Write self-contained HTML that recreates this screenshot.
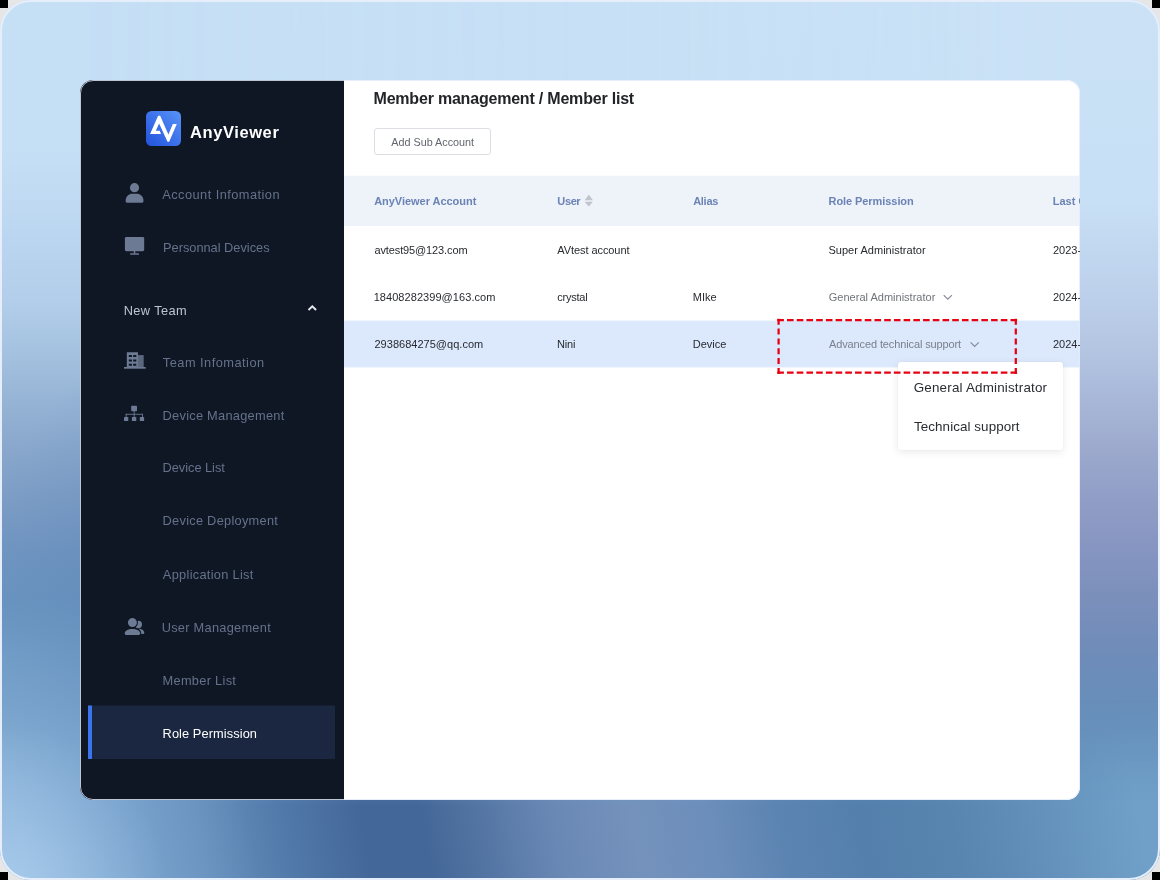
<!DOCTYPE html>
<html lang="en">
<head>
<meta charset="utf-8">
<title>AnyViewer - Member list</title>
<style>
*{box-sizing:border-box;margin:0;padding:0}
html,body{width:1160px;height:880px;overflow:hidden}
body{position:relative;background:#e6e6e6;font-family:"Liberation Sans",sans-serif}
.k{position:absolute;width:8px;height:8px;background:#000}
#bg{position:absolute;left:0;top:0;width:1160px;height:880px;border-radius:31px;overflow:hidden;background:radial-gradient(ellipse 260px 300px at 235px 615px,rgba(84,124,176,.5) 0%,rgba(84,124,176,0) 100%),linear-gradient(180deg,rgb(197,223,245) 0px,rgb(197,223,245) 150px,rgb(192,218,243) 200px,rgb(178,206,234) 300px,rgb(165,194,224) 350px,rgb(150,180,213) 400px,rgb(137,167,204) 450px,rgb(124,157,197) 500px,rgb(112,150,193) 550px,rgb(106,148,192) 600px,rgb(112,156,198) 650px,rgb(117,160,201) 700px,rgb(122,165,205) 750px,rgb(126,168,208) 800px,rgb(132,173,212) 880px)}
#bgR{position:absolute;left:0;top:0;width:1160px;height:880px;background:linear-gradient(180deg,rgb(202,225,246) 0px,rgb(200,224,245) 200px,rgb(193,215,240) 250px,rgb(188,207,234) 300px,rgb(180,197,226) 350px,rgb(168,183,216) 400px,rgb(156,169,205) 450px,rgb(144,157,198) 500px,rgb(134,149,193) 550px,rgb(123,143,187) 600px,rgb(112,140,185) 650px,rgb(104,142,186) 700px,rgb(102,145,188) 750px,rgb(104,150,192) 800px,rgb(112,160,200) 880px);-webkit-mask-image:linear-gradient(90deg,rgba(0,0,0,0) 80px,rgba(0,0,0,1) 1080px);mask-image:linear-gradient(90deg,rgba(0,0,0,0) 80px,rgba(0,0,0,1) 1080px)}
#bgB{position:absolute;left:0;top:700px;width:1160px;height:180px;background:linear-gradient(80deg,rgb(130,171,211) 2.27%,rgb(118,160,203) 9.01%,rgb(104,146,191) 17.42%,rgb(80,120,168) 25.00%,rgb(67,103,152) 31.31%,rgb(67,103,152) 36.36%,rgb(86,119,165) 41.83%,rgb(106,136,180) 47.30%,rgb(116,146,188) 54.12%,rgb(108,142,186) 60.34%,rgb(92,132,178) 66.23%,rgb(84,127,172) 72.97%,rgb(88,132,176) 80.54%,rgb(100,146,188) 88.96%,rgb(112,160,200) 96.53%);-webkit-mask-image:linear-gradient(180deg,rgba(0,0,0,0) 0px,rgba(0,0,0,.12) 30px,rgba(0,0,0,.5) 65px,rgba(0,0,0,1) 106px);mask-image:linear-gradient(180deg,rgba(0,0,0,0) 0px,rgba(0,0,0,.12) 30px,rgba(0,0,0,.5) 65px,rgba(0,0,0,1) 106px)}
#bgC{position:absolute;left:0;top:600px;width:320px;height:280px;background:radial-gradient(ellipse 260px 270px at 0px 300px,rgba(170,205,237,1) 0%,rgba(170,205,237,.5) 35%,rgba(170,205,237,.1) 65%,rgba(170,205,237,0) 100%)}
#bgb{position:absolute;left:0;top:0;width:1160px;height:880px;border-radius:31px;border:2px solid #e6eefc;z-index:2}
#win{position:absolute;left:80px;top:80px;width:1000px;height:720px;border-radius:13px;overflow:hidden;background:#fff;z-index:3}
#win:after{content:"";position:absolute;left:0;top:0;right:0;bottom:0;border:1px solid rgba(226,236,251,.82);border-radius:13px;z-index:9}
#wi{position:absolute;left:0;top:0;width:1000px;height:720px}
#side{position:absolute;left:0;top:0;width:264px;height:720px;background:#0f1624}
#act{position:absolute;left:8px;top:626px;width:247px;height:53px;background:#1b2740;box-shadow:0 -1px 0 rgba(27,39,64,.5)}
#act i{position:absolute;left:0;top:0;width:4px;height:53px;background:#3c74ee;box-shadow:0 -1px 0 rgba(60,116,238,.5)}
#thead{position:absolute;left:264px;top:96px;width:736px;height:50px;background:#eef2f9;box-shadow:0 -1px 0 rgba(238,242,249,.3)}
#row3{position:absolute;left:264px;top:241px;width:736px;height:46px;background:#dce9fd;box-shadow:0 -1px 0 rgba(220,233,253,.4),0 1px 0 rgba(220,233,253,.4)}
#btn{position:absolute;left:294px;top:48px;width:117px;height:27px;border:1px solid #dbdee3;border-radius:3px;background:#fff}
.t{position:absolute;white-space:nowrap;display:block}
svg{position:absolute;overflow:visible}
#pop{position:absolute;left:898px;top:362px;width:165px;height:88px;background:#fff;border-radius:3px;box-shadow:0 2px 9px rgba(0,0,0,.09),0 0 2px rgba(0,0,0,.04);z-index:20}
#red{z-index:25}
#txt{position:absolute;left:0;top:0;width:1080px;height:880px;overflow:hidden;z-index:40;pointer-events:none;will-change:transform}
</style>
</head>
<body>
<div class="k" style="left:0;top:0"></div><div class="k" style="right:0;top:0"></div>
<div class="k" style="left:0;bottom:0"></div><div class="k" style="right:0;bottom:0"></div>
<div id="bg"><div id="bgR"></div><div id="bgB"></div><div id="bgC"></div></div><div id="bgb"></div>
<div id="win"><div id="wi">
  <div id="side"><div id="act"><i></i></div></div>
  <div id="thead"></div>
  <div id="row3"></div>
  <div id="btn"></div>
</div></div>

<!-- icons (page coordinates) -->
<svg id="ico" width="1160" height="880" viewBox="0 0 1160 880" style="left:0;top:0;z-index:6">
  <defs>
    <linearGradient id="lg" x1="1" y1="0" x2="0" y2="1"><stop offset="0" stop-color="#5893f9"/><stop offset="1" stop-color="#2252dc"/></linearGradient>
  </defs>
  <!-- logo -->
  <rect x="146" y="111" width="35" height="35" rx="5.5" fill="url(#lg)"/>
  <path d="M150.07 133.89 L158.14 115.7 L160.19 115.7 L168.41 134.38 L172.81 124.11 L176.82 124.11 L169.19 141.82 L167.53 141.82 L159.11 123.38 L155.84 130.72 L159.8 130.72 L161.0 133.89 Z" fill="#fff"/>
  <g fill="#6c7a93">
    <!-- person -->
    <circle cx="134.5" cy="187.7" r="4.6"/>
    <path d="M125.7 200.2 C125.7 196.2 129 193.7 132.4 193.7 L136.7 193.7 C140.1 193.7 143.4 196.2 143.4 200.2 L143.4 201.2 Q143.4 202.8 141.8 202.8 L127.3 202.8 Q125.7 202.8 125.7 201.2 Z"/>
    <!-- monitor -->
    <rect x="124.9" y="236.9" width="19.3" height="14.3" rx="1.4"/>
    <rect x="133.7" y="251" width="1.6" height="2.6"/>
    <rect x="130.1" y="253.3" width="8.9" height="1.5" rx=".5"/>
    <!-- building -->
    <path fill-rule="evenodd" d="M126.8 352.2H138V367H126.8Z M128.8 355.1h3.1v2h-3.1Z M133.2 355.1h3.1v2h-3.1Z M128.8 359.5h3.1v2h-3.1Z M133.2 359.5h3.1v2h-3.1Z M128.8 363.8h3.1v2h-3.1Z M133.2 363.8h3.1v2h-3.1Z"/>
    <rect x="138" y="355.1" width="5.7" height="11.9" fill="#5a667e"/>
    <rect x="124" y="367" width="21.7" height="1.7"/>
    <!-- sitemap -->
    <rect x="131.2" y="405.7" width="5.8" height="5.5" rx=".6"/>
    <rect x="124" y="417" width="4.3" height="4.1" rx=".5"/>
    <rect x="131.9" y="417" width="4.4" height="4.1" rx=".5"/>
    <rect x="139.8" y="417" width="4.3" height="4.1" rx=".5"/>
    <rect x="133.7" y="411" width="0.9" height="6.2"/>
    <rect x="125.7" y="413.8" width="17.3" height="0.9"/>
    <rect x="125.7" y="413.8" width="0.9" height="3.4"/>
    <rect x="142.1" y="413.8" width="0.9" height="3.4"/>
    <!-- users -->
    <circle cx="138.4" cy="624.4" r="3.6"/>
    <path d="M132 634.1 C132 630.8 135 628.8 138.6 628.8 C142.3 628.8 144.3 631 144.3 633 Q144.3 634.1 143.2 634.1 Z"/>
    <circle cx="132.4" cy="622.6" r="5.6" fill="#0f1624"/>
    <path d="M123.7 636 C123.7 629.3 126 627.9 132.4 627.9 C139.4 627.9 141.4 629.2 141.4 636 Z" fill="#0f1624"/>
    <circle cx="132.4" cy="622.6" r="4.5"/>
    <path d="M124.7 633.6 C124.7 630.5 128 628.9 132.4 628.9 C136.8 628.9 140.2 630.5 140.2 633.6 Q140.2 635 138.8 635 L126.1 635 Q124.7 635 124.7 633.6 Z"/>
  </g>
  <!-- chevron up (New Team) -->
  <polyline points="308.5,310 312.3,306.3 316.1,310" fill="none" stroke="#e6e9ef" stroke-width="1.9"/>
  <!-- sort arrows -->
  <path d="M588.8 194.6 L592.9 200.2 L584.7 200.2 Z M584.7 201.7 L592.9 201.7 L588.8 206.5 Z" fill="#c0c4cc"/>
  <!-- chevrons down -->
  <polyline points="943.7,295.1 947.8,299.2 951.9,295.1" fill="none" stroke="#868b95" stroke-width="1.2"/>
  <polyline points="970.6,342.3 974.7,346.4 978.8,342.3" fill="none" stroke="#868b95" stroke-width="1.2"/>
</svg>

<svg id="red" width="1160" height="880" viewBox="0 0 1160 880" style="left:0;top:0">
  <g fill="none" stroke="#e60012" stroke-width="2.25">
  <path d="M777.3 320 H1017.1 M777.3 372.6 H1017.1" stroke-dasharray="6.6 3.117"/>
  <path d="M778.6 318.7 V373.9 M1015.8 318.7 V373.9" stroke-dasharray="6 3.84"/>
  </g>
</svg>
<div id="pop"></div>
<div id="txt">
<span class="t" style="left:189.99px;top:120.6px;font-size:16.5px;line-height:22px;font-weight:700;color:#ffffff;letter-spacing:0.593px">AnyViewer</span>
<span class="t" style="left:162.22px;top:186.0px;font-size:12.8px;line-height:17px;font-weight:400;color:#65728b;letter-spacing:0.456px">Account Infomation</span>
<span class="t" style="left:163.02px;top:239.4px;font-size:12.8px;line-height:17px;font-weight:400;color:#65728b;letter-spacing:-0.009px">Personnal Devices</span>
<span class="t" style="left:123.63px;top:301.6px;font-size:12.8px;line-height:17px;font-weight:400;color:#bfc5d0;letter-spacing:0.409px">New Team</span>
<span class="t" style="left:162.82px;top:353.7px;font-size:12.8px;line-height:17px;font-weight:400;color:#65728b;letter-spacing:0.477px">Team Infomation</span>
<span class="t" style="left:162.58px;top:407.1px;font-size:12.8px;line-height:17px;font-weight:400;color:#65728b;letter-spacing:0.268px">Device Management</span>
<span class="t" style="left:162.58px;top:459.0px;font-size:12.8px;line-height:17px;font-weight:400;color:#65728b;letter-spacing:-0.031px">Device List</span>
<span class="t" style="left:162.58px;top:511.9px;font-size:12.8px;line-height:17px;font-weight:400;color:#65728b;letter-spacing:0.268px">Device Deployment</span>
<span class="t" style="left:162.87px;top:565.6px;font-size:12.8px;line-height:17px;font-weight:400;color:#65728b;letter-spacing:0.292px">Application List</span>
<span class="t" style="left:161.70px;top:619.4px;font-size:12.8px;line-height:17px;font-weight:400;color:#65728b;letter-spacing:0.267px">User Management</span>
<span class="t" style="left:162.55px;top:672.2px;font-size:12.8px;line-height:17px;font-weight:400;color:#65728b;letter-spacing:0.294px">Member List</span>
<span class="t" style="left:162.56px;top:724.8px;font-size:12.8px;line-height:17px;font-weight:400;color:#ffffff;letter-spacing:0.090px">Role Permission</span>
<span class="t" style="left:373.53px;top:87.9px;font-size:16px;line-height:21px;font-weight:700;color:#222428;letter-spacing:-0.203px">Member management / Member list</span>
<span class="t" style="left:391.28px;top:134.7px;font-size:10.8px;line-height:15px;font-weight:400;color:#62666d;letter-spacing:-0.003px">Add Sub Account</span>
<span class="t" style="left:374.16px;top:193.6px;font-size:11px;line-height:15px;font-weight:700;color:#6b83b5;letter-spacing:-0.032px">AnyViewer Account</span>
<span class="t" style="left:557.37px;top:193.6px;font-size:11px;line-height:15px;font-weight:700;color:#6b83b5;letter-spacing:-0.397px">User</span>
<span class="t" style="left:693.20px;top:193.6px;font-size:11px;line-height:15px;font-weight:700;color:#6b83b5;letter-spacing:-0.286px">Alias</span>
<span class="t" style="left:828.53px;top:193.6px;font-size:11px;line-height:15px;font-weight:700;color:#6b83b5;letter-spacing:-0.070px">Role Permission</span>
<span class="t" style="left:1052.71px;top:193.6px;font-size:11px;line-height:15px;font-weight:700;color:#6b83b5;letter-spacing:0.000px">Last Connection</span>
<span class="t" style="left:374.46px;top:242.6px;font-size:11px;line-height:15px;font-weight:400;color:#282a2f;letter-spacing:-0.121px">avtest95@123.com</span>
<span class="t" style="left:557.21px;top:242.6px;font-size:11px;line-height:15px;font-weight:400;color:#282a2f;letter-spacing:-0.065px">AVtest account</span>
<span class="t" style="left:828.39px;top:242.6px;font-size:11px;line-height:15px;font-weight:400;color:#282a2f;letter-spacing:0.037px">Super Administrator</span>
<span class="t" style="left:1052.92px;top:242.6px;font-size:11px;line-height:15px;font-weight:400;color:#282a2f;letter-spacing:0.000px">2023-08-01</span>
<span class="t" style="left:373.63px;top:289.8px;font-size:11px;line-height:15px;font-weight:400;color:#282a2f;letter-spacing:0.063px">18408282399@163.com</span>
<span class="t" style="left:557.21px;top:289.8px;font-size:11px;line-height:15px;font-weight:400;color:#282a2f;letter-spacing:-0.223px">crystal</span>
<span class="t" style="left:692.74px;top:289.8px;font-size:11px;line-height:15px;font-weight:400;color:#282a2f;letter-spacing:0.000px">MIke</span>
<span class="t" style="left:828.78px;top:289.8px;font-size:11px;line-height:15px;font-weight:400;color:#70747a;letter-spacing:0.008px">General Administrator</span>
<span class="t" style="left:1052.92px;top:289.8px;font-size:11px;line-height:15px;font-weight:400;color:#282a2f;letter-spacing:0.000px">2024-01-01</span>
<span class="t" style="left:374.46px;top:337.0px;font-size:11px;line-height:15px;font-weight:400;color:#282a2f;letter-spacing:0.024px">2938684275@qq.com</span>
<span class="t" style="left:556.88px;top:337.0px;font-size:11px;line-height:15px;font-weight:400;color:#282a2f;letter-spacing:-0.101px">Nini</span>
<span class="t" style="left:692.73px;top:337.0px;font-size:11px;line-height:15px;font-weight:400;color:#282a2f;letter-spacing:0.000px">Device</span>
<span class="t" style="left:829.03px;top:337.0px;font-size:11px;line-height:15px;font-weight:400;color:#7a7f88;letter-spacing:-0.122px">Advanced technical support</span>
<span class="t" style="left:1052.91px;top:337.0px;font-size:11px;line-height:15px;font-weight:400;color:#282a2f;letter-spacing:0.000px">2024-01-01</span>
<span class="t" style="left:913.74px;top:378.7px;font-size:13.4px;line-height:18px;font-weight:400;color:#2a2c31;letter-spacing:0.192px">General Administrator</span>
<span class="t" style="left:914.02px;top:418.0px;font-size:13.4px;line-height:18px;font-weight:400;color:#2a2c31;letter-spacing:0.078px">Technical support</span>
</div>
</body>
</html>
